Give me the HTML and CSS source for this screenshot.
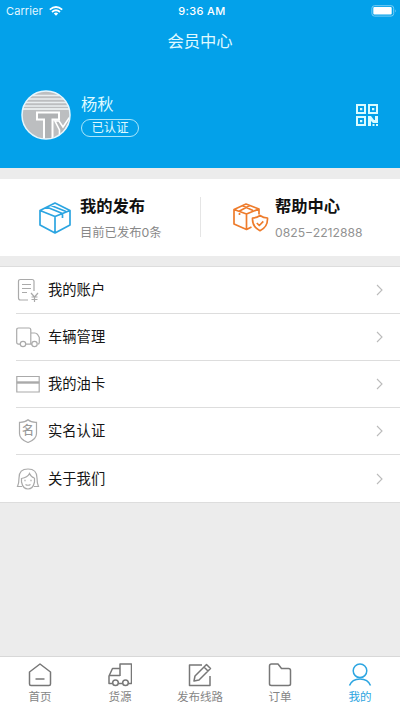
FILE: index.html
```html
<!DOCTYPE html>
<html lang="zh-CN">
<head>
<meta charset="utf-8">
<title>会员中心</title>
<link rel="stylesheet" href="styles.css">
</head>
<body>
<header class="header">
  <div class="status">
    <div class="carrier"><span>Carrier</span>
      <svg width="14" height="10" viewBox="0 0 14 10" fill="none" stroke="#fff" stroke-width="1.8"><path d="M.8 3.6Q7-1.6 13.2 3.6M3 6Q7 2.6 11 6"/><path d="M4.8 7.4Q7 5.8 9.2 7.4L7 9.8Z" fill="#fff" stroke="none"/></svg>
    </div>
    <b class="time">9:36 AM</b>
    <svg class="battery" width="26" height="12" viewBox="0 0 26 12"><rect x=".9" y=".7" width="21.8" height="10.4" rx="2.6" fill="none" stroke="#79cdf5"/><rect x="2.3" y="2.1" width="18.4" height="7.5" rx="1" fill="#fff"/><path d="M24 4.2q1.6 1.7 0 3.4z" fill="#79cdf5"/></svg>
  </div>
  <h1 class="title">会员中心</h1>
  <div class="profile">
    <svg class="avatar" width="50" height="50" viewBox="0 0 50 50">
      <defs><clipPath id="disc"><circle cx="25" cy="25" r="24"/></clipPath></defs>
      <g clip-path="url(#disc)">
        <rect width="50" height="50" fill="#bcbec0"/>
        <path d="M0 5.5h50M0 9h50M0 12.500h50M0 16h50" stroke="#e9eef0" stroke-width="1.3"/>
        <path d="M0 19h50" stroke="#f4f8fa" stroke-width="1.600"/>
        <path d="M16 22.500H38v7h-6.500v21H23v-21h-7z" fill="#b0b2b4" stroke="#fff" stroke-width="2"/>
        <path d="M34 31h4l4 6 6-9h3l-7.500 13v9h-5V40z" fill="#b4b6b8" stroke="#fff" stroke-width="1.6"/>
      </g>
      <circle cx="25" cy="25" r="24" fill="none" stroke="#e6f6fd" stroke-width="1.500"/>
    </svg>
    <div class="identity"><div class="name">杨秋</div><div class="badge">已认证</div></div>
    <svg class="qr" width="22" height="22" viewBox="0 0 22 22" fill="#d9fbff"><path fill-rule="evenodd" d="M0 0h10v10H0zM2 2v6h6V2zM12 0h10v10H12zM14 2v6h6V2zM0 12h10v10H0zM2 14v6h6v-6z"/><path d="M4 4h2.3v2.3H4zM16 4h2.3v2.3H16zM4 16h2.3v2.3H4zM12 12h3l3 4h1v-4h3v7h-5l-2-2v5h-3zM16.500 20h2v2h-2zM20 20h2v2h-2z"/></svg>
  </div>
</header>
<section class="cards">
  <div class="card">
    <svg width="32" height="32" viewBox="0 0 32 32" fill="none" stroke="#2ca5e1" stroke-width="1.7" stroke-linejoin="round"><path d="M16 1 31 8.500v14.500L16 31 1 23V8.500zM1 8.500l15 6 15-6M16 14.500V31M7.500 5 23.500 11.500v4.500M11.500 3.200 27 9.500"/></svg>
    <div><h2>我的发布</h2><p>目前已发布0条</p></div>
  </div>
  <div class="card help">
    <svg width="36" height="29" viewBox="0 0 36 29" fill="none" stroke="#ee7c2c" stroke-width="1.7" stroke-linejoin="round"><path d="M18.500 24 13.500 26.500 1 21V6.500L13 1l13 5v5.500M1 6.500l12.500 4.500L26 6M13.500 11v15.500M17 2.500 6.500 8v4M9.500 2.800 20 7.500"/><path d="M27 12.500q3.500 2.500 7.500 2.500.5 9-7.500 12.700Q19 24 19.500 15q4 0 7.500-2.500zM23.800 20l2.500 2.500 4-4.200"/></svg>
    <div><h2>帮助中心</h2><p class="phone">0825−2212888</p></div>
  </div>
</section>
<nav class="list">
  <a class="row">
    <svg class="icon" viewBox="0 0 24 24"><path d="M12 22H4.500q-2 0-2-2V3.500q0-2 2-2H16q2 0 2 2V13M6 6.500h9M6 10.500h9M6 14.500h5M15 15l3.500 4 3.500-4M18.500 19v5M15.500 19h6M15.500 21.500h6"/></svg>
    <span>我的账户</span><svg class="arrow" viewBox="0 0 7 12"><path d="m1 1 5 5-5 5"/></svg></a>
  <a class="row">
    <svg class="icon" viewBox="0 0 24 24"><path d="M4 19.200H2.500q-1.800 0-1.800-2V5q0-2 1.800-2H13q1.800 0 1.800 2v14.200H9.500M14.800 8h4q1.500 0 2.800 1.500l1.700 3v5q0 1.700-1.500 1.700M14.800 19.200H16"/><circle cx="7" cy="19" r="2.700"/><circle cx="18.500" cy="19" r="2.700"/></svg>
    <span>车辆管理</span><svg class="arrow" viewBox="0 0 7 12"><path d="m1 1 5 5-5 5"/></svg></a>
  <a class="row">
    <svg class="icon" viewBox="0 0 24 24"><path d="M.8 4.500h22.400v15.500H.8z"/><path d="M.8 10.500h22.400" stroke-width="2.400"/></svg>
    <span>我的油卡</span><svg class="arrow" viewBox="0 0 7 12"><path d="m1 1 5 5-5 5"/></svg></a>
  <a class="row">
    <svg class="icon" viewBox="0 0 24 24"><path d="M12 .8q3 2.700 8.500 2.500v11.200q0 6-8.500 9-8.500-3-8.500-9V3.300q5.500 .2 8.500-2.500z"/><text x="12" y="16">名</text></svg>
    <span>实名认证</span><svg class="arrow" viewBox="0 0 7 12"><path d="m1 1 5 5-5 5"/></svg></a>
  <a class="row">
    <svg class="icon" viewBox="0 0 24 24"><path d="M6 19.500H1.500Q3 16 3 11 3 2 12 2t9 9q0 5 1.500 8.500H18"/><path d="M5.500 11v4q1.500 7 6.500 7t6.500-7v-4M5.500 11.500q6-1 8-5 1.500 3.500 5 4.500M9 12.800v1.500M15 12.800v1.500M9.500 17.500q2.500 1.500 5 0"/></svg>
    <span>关于我们</span><svg class="arrow" viewBox="0 0 7 12"><path d="m1 1 5 5-5 5"/></svg></a>
</nav>
<footer class="tabs">
  <a class="tab"><svg viewBox="0 0 24 24"><path d="M1.500 9 12 1l10.500 8v12q0 1.500-1.500 1.500H3q-1.500 0-1.500-1.500zM7.500 16h9"/></svg><span>首页</span></a>
  <a class="tab"><svg viewBox="0 0 24 24"><path d="M4.500 20.500H1V13l3.500-7.500H12M1 12.500h11M12 13V1h11.500v19.500h-3.200M10.500 20.500h4"/><circle cx="7.500" cy="19.800" r="2.800"/><circle cx="17.500" cy="19.800" r="2.800"/></svg><span>货源</span></a>
  <a class="tab"><svg viewBox="0 0 24 24"><path d="M14 2H1.500v20.500H22V13M6 18l1-5L18.500 1.500l4 4-11.500 11.500zM16 4l4 4"/></svg><span>发布线路</span></a>
  <a class="tab"><svg viewBox="0 0 24 24"><path d="M1.500 3q0-2 2-2h6.500l3.500 4.500h7q2 0 2 2v13.500q0 1.500-2 1.500h-17q-2 0-2-1.500z"/></svg><span>订单</span></a>
  <a class="tab active"><svg viewBox="0 0 24 24"><circle cx="12" cy="7.800" r="6.800"/><path d="M1.500 22.500Q4 16 12 16t10.500 6.500"/></svg><span>我的</span></a>
</footer>
</body>
</html>
```
FILE: styles.css
```css
* { box-sizing: border-box; }
body {
  margin: 0;
  height: 710px;
  display: flex;
  flex-direction: column;
  background: #ececec;
  font-family: "Inter", "Noto Sans CJK SC", sans-serif;
  overflow: hidden;
}
h1, h2, p { margin: 0; font-weight: 400; }
svg { display: block; flex: none; }
.header { height: 168px; background: #03a1ea; color: #fff; }
.status {
  height: 21px;
  padding: 0 3px 0 6px;
  display: grid;
  grid-template-columns: 1fr auto 1fr;
  align-items: center;
  font-size: 11px;
}
.carrier { display: flex; align-items: center; gap: 6px; color: #e4f7ff; letter-spacing: .1px; }
.time { font-weight: 500; letter-spacing: .35px; position: relative; left: 1px; padding-right: 1px; }
.battery { justify-self: end; }
.title { height: 40px; line-height: 40px; text-align: center; font-size: 16.3px; color: #e0faff; }
.profile { display: flex; align-items: center; height: 60px; margin-top: 24px; padding: 0 22px 0 21px; }
.identity { margin: -1px 0 0 10px; flex: 1; color: #dffaff; }
.name { font-size: 16.3px; line-height: 22px; margin-bottom: 4px; }
.badge { width: 58px; height: 18px; border: 1px solid #a9e6fb; border-radius: 9px; font-size: 12.3px; line-height: 15px; text-align: center; }
.cards { height: 77px; margin: 11px 0 10px; display: flex; background: #fff; }
.card { width: 200px; display: flex; padding: 15px 0 0 39px; gap: 9px; }
.card > svg { margin-top: 8px; }
.card h2 { font-size: 16.3px; line-height: 24px; font-weight: 700; color: #111; white-space: nowrap; }
.card p { margin-top: 4px; font-size: 12.3px; line-height: 21px; color: #888; white-space: nowrap; }
.card .phone { font-size: 12.2px; color: #929292; }
.help { padding-left: 33px; gap: 6px; background: linear-gradient(#e5e5e5, #e5e5e5) 0 18px / 1px 40px no-repeat; }
.help > svg { margin-top: 9px; }
.list { height: 237px; background: #fff; border-top: 1px solid #ddd; border-bottom: 1px solid #ddd; display: grid; grid-template-rows: repeat(5, 1fr); padding-left: 16px; }
.row { display: flex; align-items: center; padding-right: 17px; color: #151515; font-size: 14.3px; border-bottom: 1px solid #ddd; }
.row:last-child { border: 0; }
.row span { flex: 1; margin-left: 8px; padding-bottom: 3px; }
.icon { width: 24px; height: 24px; fill: none; stroke: #aaa; stroke-width: 1.2; }
.icon text { font-size: 12px; font-weight: 500; fill: #999; stroke: none; text-anchor: middle; }
.arrow { width: 7px; height: 12px; fill: none; stroke: #bbb; stroke-width: 1.1; }
.tabs { height: 54px; margin-top: auto; background: #fff; border-top: 1px solid #d8d8d8; display: grid; grid-template-columns: repeat(5, 1fr); }
.tab { display: flex; flex-direction: column; align-items: center; padding-top: 6px; color: #858585; font-size: 11.5px; line-height: 16px; }
.tab svg { width: 24px; height: 24px; fill: none; stroke: #777; stroke-width: 1.5; stroke-linejoin: round; margin-bottom: 2px; }
.active { color: #2ca5e1; }
.active svg { stroke: #2ca5e1; }
```
